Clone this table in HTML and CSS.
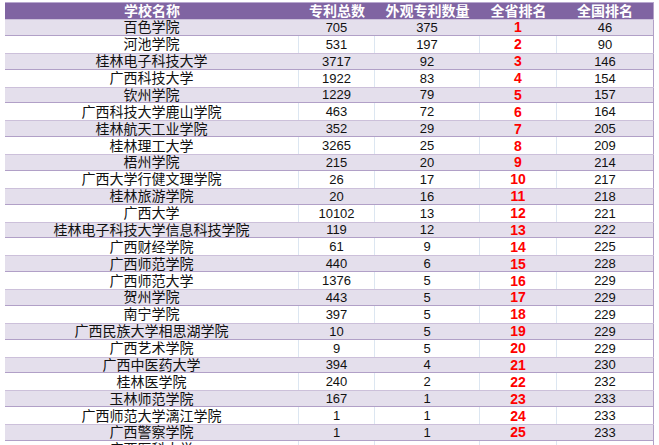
FILE: index.html
```html
<!DOCTYPE html>
<html lang="zh">
<head>
<meta charset="utf-8">
<link rel="stylesheet" href="styles.css">
</head>
<body>
<div class="sheet">
  <div class="row head">
    <div class="c">学校名称</div><div class="c">专利总数</div><div class="c">外观专利数量</div><div class="c">全省排名</div><div class="c">全国排名</div>
  </div>
  <div class="row alt"><div class="c name">百色学院</div><div class="c">705</div><div class="c">375</div><div class="c rank">1</div><div class="c">46</div></div>
  <div class="row"><div class="c name">河池学院</div><div class="c">531</div><div class="c">197</div><div class="c rank">2</div><div class="c">90</div></div>
  <div class="row alt"><div class="c name">桂林电子科技大学</div><div class="c">3717</div><div class="c">92</div><div class="c rank">3</div><div class="c">146</div></div>
  <div class="row"><div class="c name">广西科技大学</div><div class="c">1922</div><div class="c">83</div><div class="c rank">4</div><div class="c">154</div></div>
  <div class="row alt"><div class="c name">钦州学院</div><div class="c">1229</div><div class="c">79</div><div class="c rank">5</div><div class="c">157</div></div>
  <div class="row"><div class="c name">广西科技大学鹿山学院</div><div class="c">463</div><div class="c">72</div><div class="c rank">6</div><div class="c">164</div></div>
  <div class="row alt"><div class="c name">桂林航天工业学院</div><div class="c">352</div><div class="c">29</div><div class="c rank">7</div><div class="c">205</div></div>
  <div class="row"><div class="c name">桂林理工大学</div><div class="c">3265</div><div class="c">25</div><div class="c rank">8</div><div class="c">209</div></div>
  <div class="row alt"><div class="c name">梧州学院</div><div class="c">215</div><div class="c">20</div><div class="c rank">9</div><div class="c">214</div></div>
  <div class="row"><div class="c name">广西大学行健文理学院</div><div class="c">26</div><div class="c">17</div><div class="c rank">10</div><div class="c">217</div></div>
  <div class="row alt"><div class="c name">桂林旅游学院</div><div class="c">20</div><div class="c">16</div><div class="c rank">11</div><div class="c">218</div></div>
  <div class="row"><div class="c name">广西大学</div><div class="c">10102</div><div class="c">13</div><div class="c rank">12</div><div class="c">221</div></div>
  <div class="row alt"><div class="c name">桂林电子科技大学信息科技学院</div><div class="c">119</div><div class="c">12</div><div class="c rank">13</div><div class="c">222</div></div>
  <div class="row"><div class="c name">广西财经学院</div><div class="c">61</div><div class="c">9</div><div class="c rank">14</div><div class="c">225</div></div>
  <div class="row alt"><div class="c name">广西师范学院</div><div class="c">440</div><div class="c">6</div><div class="c rank">15</div><div class="c">228</div></div>
  <div class="row"><div class="c name">广西师范大学</div><div class="c">1376</div><div class="c">5</div><div class="c rank">16</div><div class="c">229</div></div>
  <div class="row alt"><div class="c name">贺州学院</div><div class="c">443</div><div class="c">5</div><div class="c rank">17</div><div class="c">229</div></div>
  <div class="row"><div class="c name">南宁学院</div><div class="c">397</div><div class="c">5</div><div class="c rank">18</div><div class="c">229</div></div>
  <div class="row alt"><div class="c name">广西民族大学相思湖学院</div><div class="c">10</div><div class="c">5</div><div class="c rank">19</div><div class="c">229</div></div>
  <div class="row"><div class="c name">广西艺术学院</div><div class="c">9</div><div class="c">5</div><div class="c rank">20</div><div class="c">229</div></div>
  <div class="row alt"><div class="c name">广西中医药大学</div><div class="c">394</div><div class="c">4</div><div class="c rank">21</div><div class="c">230</div></div>
  <div class="row"><div class="c name">桂林医学院</div><div class="c">240</div><div class="c">2</div><div class="c rank">22</div><div class="c">232</div></div>
  <div class="row alt"><div class="c name">玉林师范学院</div><div class="c">167</div><div class="c">1</div><div class="c rank">23</div><div class="c">233</div></div>
  <div class="row"><div class="c name">广西师范大学漓江学院</div><div class="c">1</div><div class="c">1</div><div class="c rank">24</div><div class="c">233</div></div>
  <div class="row alt"><div class="c name">广西警察学院</div><div class="c">1</div><div class="c">1</div><div class="c rank">25</div><div class="c">233</div></div>
  <div class="row"><div class="c name">广西医科大学</div><div class="c"></div><div class="c"></div><div class="c rank"></div><div class="c"></div></div>
</div>
</body>
</html>
```
FILE: styles.css
```css
html, body {
  margin: 0;
  padding: 0;
  background: #ffffff;
  overflow: hidden;
}
body {
  width: 659px;
  height: 445px;
}
.sheet {
  margin: 2px 0 0 5px;
  width: 649px;
  display: flex;
  flex-direction: column;
  font-family: "Liberation Sans", "Noto Sans CJK SC", sans-serif;
  font-size: 13px;
  color: #111111;
}
.row {
  display: grid;
  grid-template-columns: 294px 76px 105px 77px 97px;
  height: 16.875px;
  box-sizing: border-box;
  flex: none;
}
.row .c {
  display: flex;
  align-items: center;
  justify-content: center;
  white-space: nowrap;
  line-height: 1;
  overflow: hidden;
  border-right: 1px solid #dce6f1;
  box-sizing: border-box;
}
.row .c:last-child {
  border-right: 1px solid #b1a0c7;
}
.row.head {
  height: 17px;
  background: #8064a2;
  border-top: 1px solid #b8a8cf;
  color: #ffffff;
  font-family: "Liberation Sans", "Noto Sans CJK SC", sans-serif;
  font-weight: bold;
  font-size: 14px;
}
.row.head .c {
  border-right: none;
}
.row.head .c:last-child {
  border-right: 1px solid #b1a0c7;
}
.row.alt {
  background: #e4dfec;
  border-top: 1px solid #ccc0da;
  border-bottom: 1px solid #b1a0c7;
}
.row.alt .c {
  border-right-color: #e4dfec;
}
.row.alt .c:last-child {
  border-right-color: #b1a0c7;
}
.name {
  font-family: "Liberation Sans", "Noto Sans CJK SC", sans-serif;
  font-size: 14px;
  color: #111111;
}
.rank {
  color: #ff0000;
  font-weight: bold;
  font-size: 14px;
}
```
